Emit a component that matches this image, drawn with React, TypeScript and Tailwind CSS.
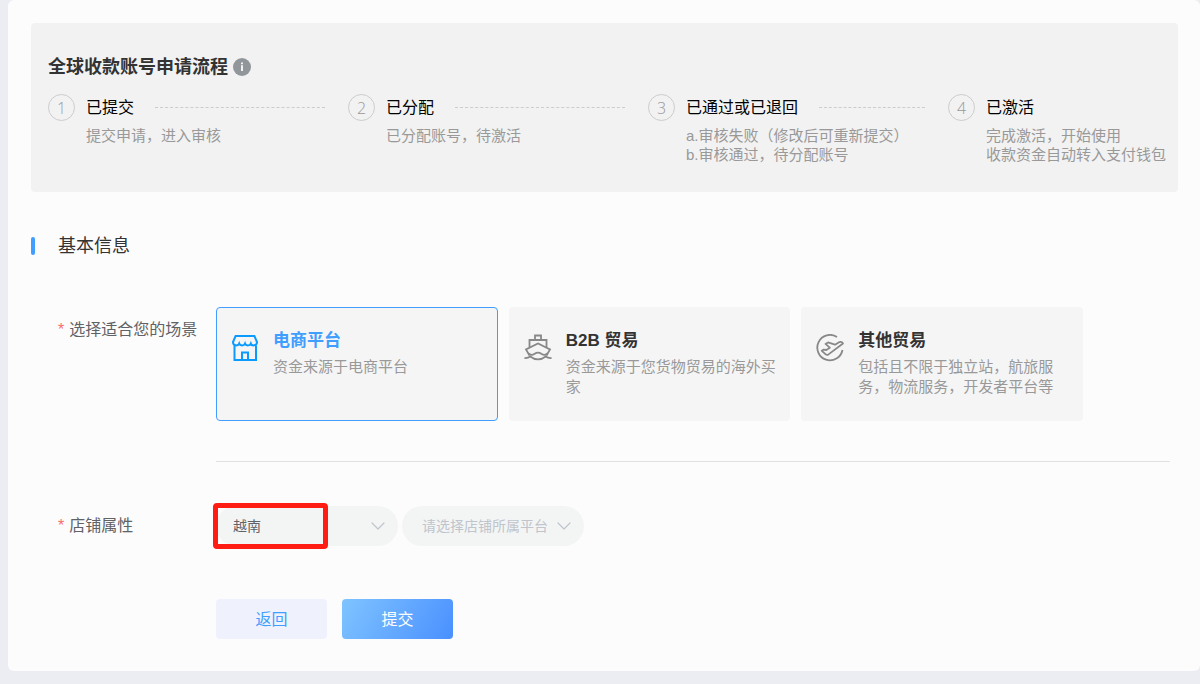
import { useState } from 'react';
import type { ReactNode } from 'react';
import { ChevronDown } from 'lucide-react';

const steps = [
  { title: '已提交', lines: ['提交申请，进入审核'] },
  { title: '已分配', lines: ['已分配账号，待激活'] },
  { title: '已通过或已退回', lines: ['a.审核失败（修改后可重新提交）', 'b.审核通过，待分配账号'] },
  { title: '已激活', lines: ['完成激活，开始使用', '收款资金自动转入支付钱包'] },
];

const scenes = [
  { id: 'shop', title: '电商平台', desc: '资金来源于电商平台', icon: <ShopIcon /> },
  { id: 'b2b', title: 'B2B 贸易', desc: '资金来源于您货物贸易的海外买家', icon: <ShipIcon /> },
  {
    id: 'other',
    title: '其他贸易',
    desc: '包括且不限于独立站，航旅服务，物流服务，开发者平台等',
    icon: <PlaneIcon />,
  },
];

function ShopIcon() {
  return (
    <svg width="28" height="28" viewBox="0 0 28 28" fill="none" stroke="currentColor" strokeWidth="2">
      <path d="M4.6 2h18.8L26 8c0 4.200-5.400 4.200-6.200 1.600-1 2.400-5 2.400-5.800 0-1 2.400-5 2.400-5.800 0C7.200 12.200 2 12.200 2 8z" />
      <path d="M3.500 11.500V26h21.500V11.500" />
      <path d="M11 26v-7.500h6V26" />
    </svg>
  );
}

function ShipIcon() {
  return (
    <svg width="28" height="28" viewBox="0 0 28 28" fill="none" stroke="currentColor" strokeWidth="1.8">
      <path d="M11 6V1.500h6V6" />
      <path d="M5.500 13V6h17v7" />
      <path d="M5.500 21.500 2 15.500l12-6 12 6-3.500 6" />
      <path d="M4.500 19.500c2.200 2 4.400 1.400 6.200.2 2-1.400 4.600-1.400 6.600 0 1.800 1.200 4 1.800 6.200-.2" />
      <path d="M.5 24c2.400.2 4-.2 5.800-1.500 2.200 1.800 4.800 2.800 7.700 2.800s5.500-1 7.700-2.800c1.800 1.300 3.400 1.700 5.800 1.500" />
    </svg>
  );
}

function PlaneIcon() {
  return (
    <svg width="28" height="28" viewBox="0 0 28 28" fill="none" stroke="currentColor" strokeWidth="1.8">
      <path d="M21 3A12.700 12.700 0 1 0 26.500 16" />
      <path
        d="M27 9.500c-1.200-2-3.200-1.800-4.800-.8l-3.200 2-7-2.300-2.500 1.500 4.300 3.800-3.500 2.300-2.600-.4-1.900 1.200 4.200 3.800c.8.500 1.700.3 2.500-.2z"
        strokeLinejoin="round"
      />
    </svg>
  );
}

function FormRow({ id, label, htmlFor, children }: { id: string; label: string; htmlFor?: string; children: ReactNode }) {
  const content = (
    <>
      <span className="mr-[5px] text-[#f56c6c]">*</span>
      {label}
    </>
  );
  const style = 'block w-[158px] shrink-0 text-base leading-6 whitespace-nowrap text-[#606266]';
  return (
    <div className="flex">
      {htmlFor ? (
        <label id={id} htmlFor={htmlFor} className={`${style} pt-2`}>{content}</label>
      ) : (
        <span id={id} className={`${style} pt-[11px]`}>{content}</span>
      )}
      <div className="min-w-0 flex-1">{children}</div>
    </div>
  );
}

export default function App() {
  const [scene, setScene] = useState('shop');
  const [platform, setPlatform] = useState('');

  return (
    <div className="min-h-screen bg-[#ecedf3] pb-[13px] pl-2 font-['Liberation_Sans','Noto_Sans_CJK_SC',sans-serif]">
      <main className="rounded-md bg-[#fcfcfc] pt-[23px] pr-[22px] pb-8 pl-[23px]">
        <section className="rounded bg-[#f2f2f2] px-[17px] pt-[31px] pb-7">
          <div className="flex items-center gap-[5px]">
            <h1 className="text-lg leading-[26px] font-bold text-[#333]">全球收款账号申请流程</h1>
            <svg width="18" height="18" viewBox="0 0 18 18" aria-label="说明">
              <circle cx="9" cy="9" r="9" fill="#909699" />
              <path d="M8 4.500h2v1.800H8zM8 7.300h2v5.700H8z" fill="#f2f2f2" />
            </svg>
          </div>
          <ol className="mt-[14px] flex">
            {steps.map((step, i) => {
              const last = i === steps.length - 1;
              return (
                <li key={step.title} className={last ? 'w-[213px] shrink-0' : 'min-w-0 flex-1'}>
                  <div className="flex items-center">
                    <span className="mr-[11px] flex size-[27px] shrink-0 items-center justify-center rounded-full border border-[#ccc] font-['Open_Sans',sans-serif] text-base font-light text-[#999]">
                      {i + 1}
                    </span>
                    <h2 className="text-base leading-6 whitespace-nowrap text-black">{step.title}</h2>
                    {!last && <span className="mr-[23px] ml-[21px] flex-1 border-t border-dashed border-[#ccc]" />}
                  </div>
                  <div className="mt-[5px] min-h-[38px] pl-[38px] text-[15px] leading-[19px] whitespace-nowrap text-[#999]">
                    {step.lines.map((line) => (
                      <p key={line}>{line}</p>
                    ))}
                  </div>
                </li>
              );
            })}
          </ol>
        </section>

        <div className="mt-[41px] flex items-center gap-[23px]">
          <span className="h-[18px] w-1 rounded-xs bg-[#409eff]" />
          <h2 className="text-lg leading-[26px] text-[#333]">基本信息</h2>
        </div>

        <form className="mt-12 pr-2 pl-[27px]" onSubmit={(e) => e.preventDefault()}>
          <FormRow id="scene-label" label="选择适合您的场景">
            <div role="radiogroup" aria-labelledby="scene-label" className="flex max-w-[867px] gap-[11px]">
              {scenes.map((item) => (
                <label
                  key={item.id}
                  className={`relative flex min-h-[114px] flex-1 cursor-pointer gap-[14px] rounded border bg-[#f5f5f5] pt-[21px] pr-3 pb-4 pl-[14px] ${
                    scene === item.id ? 'border-[#409eff] text-[#0b9bff]' : 'border-transparent text-[#888]'
                  }`}
                >
                  <input
                    type="radio"
                    name="scene"
                    value={item.id}
                    checked={scene === item.id}
                    onChange={() => setScene(item.id)}
                    className="sr-only"
                  />
                  <span className="shrink-0 pt-[5px]">{item.icon}</span>
                  <span className="min-w-0 flex-1">
                    <span
                      className={`block text-[17px] leading-6 font-bold ${
                        scene === item.id ? 'text-[#409eff]' : 'text-[#333]'
                      }`}
                    >
                      {item.title}
                    </span>
                    <span className="mt-1 block text-[15px] leading-5 text-[#999]">{item.desc}</span>
                  </span>
                </label>
              ))}
            </div>
          </FormRow>

          <hr className="mt-10 ml-[158px] border-[#dfe1e3]" />

          <div className="mt-11">
            <FormRow id="store-label" label="店铺属性" htmlFor="country">
              <div className="flex gap-1">
                <div className="relative w-[182px]">
                  <select
                    id="country"
                    defaultValue="vn"
                    className="h-10 w-full appearance-none rounded-full bg-[#f3f5f4] pr-9 pl-[17px] text-sm text-[#606266] outline-none"
                  >
                    <option value="vn">越南</option>
                  </select>
                  <ChevronDown
                    size={24}
                    strokeWidth={1.2}
                    className="pointer-events-none absolute top-2 right-2 text-[#c0c4cc]"
                  />
                  {/* highlight frame around the country value */}
                  <span className="pointer-events-none absolute -top-[3px] -left-[3px] h-[46px] w-[115px] rounded border-5 border-[#ff1c12]" />
                </div>
                <div className="relative w-[182px]">
                  <select
                    aria-label="店铺所属平台"
                    value={platform}
                    onChange={(e) => setPlatform(e.target.value)}
                    className="h-10 w-full appearance-none rounded-full bg-[#f3f5f4] pr-7 pl-5 text-sm text-[#c0c4cc] outline-none"
                  >
                    <option value="">请选择店铺所属平台</option>
                  </select>
                  <ChevronDown
                    size={24}
                    strokeWidth={1.2}
                    className="pointer-events-none absolute top-2 right-2 text-[#c0c4cc]"
                  />
                </div>
              </div>
            </FormRow>
          </div>

          <div className="mt-[53px] flex gap-[15px] pl-[158px]">
            <button type="button" className="h-10 w-[111px] rounded bg-[#eff2fd] pt-0.5 text-base text-[#409eff]">
              返回
            </button>
            <button
              type="submit"
              className="h-10 w-[111px] rounded bg-linear-[120deg] from-[#7fc4ff] to-[#4a90ff] pt-0.5 text-base text-white"
            >
              提交
            </button>
          </div>
        </form>
      </main>
    </div>
  );
}
